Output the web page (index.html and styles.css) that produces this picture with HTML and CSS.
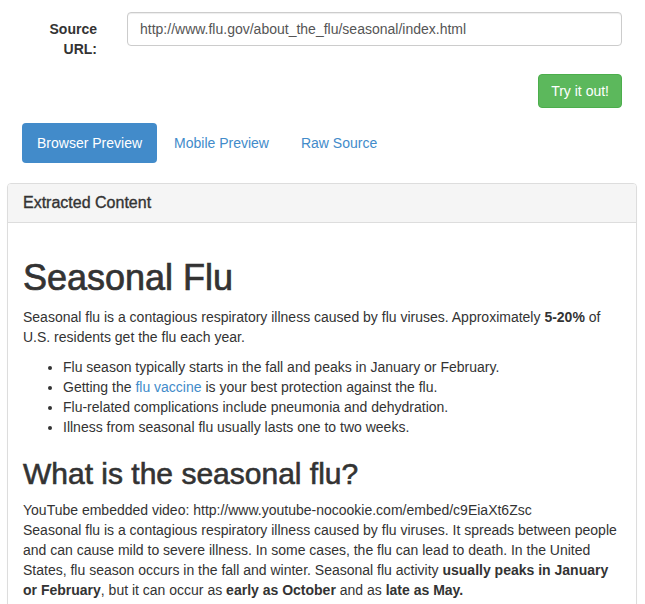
FILE: index.html
```html
<!DOCTYPE html>
<html>
<head>
<meta charset="utf-8">
<link rel="stylesheet" href="styles.css">
</head>
<body>
<div class="container">
  <form class="form">
    <div class="form-row">
      <label class="label" for="url">Source URL:</label>
      <div class="field">
        <input id="url" class="input" type="text" value="http://www.flu.gov/about_the_flu/seasonal/index.html">
      </div>
    </div>
    <div class="actions">
      <button type="button" class="btn-success">Try it out!</button>
    </div>
  </form>
  <ul class="pills">
    <li class="pill active"><a href="#">Browser Preview</a></li>
    <li class="pill"><a href="#">Mobile Preview</a></li>
    <li class="pill"><a href="#">Raw Source</a></li>
  </ul>
  <div class="panel">
    <div class="panel-heading">Extracted Content</div>
    <div class="panel-body">
      <h1>Seasonal Flu</h1>
      <p>Seasonal flu is a contagious respiratory illness caused by flu viruses. Approximately <strong>5-20%</strong> of U.S. residents get the flu each year.</p>
      <ul class="bullets">
        <li>Flu season typically starts in the fall and peaks in January or February.</li>
        <li>Getting the <a href="#">flu vaccine</a> is your best protection against the flu.</li>
        <li>Flu-related complications include pneumonia and dehydration.</li>
        <li>Illness from seasonal flu usually lasts one to two weeks.</li>
      </ul>
      <h2>What is the seasonal flu?</h2>
      <div class="embed">YouTube embedded video: http://www.youtube-nocookie.com/embed/c9EiaXt6Zsc</div>
      <p>Seasonal flu is a contagious respiratory illness caused by flu viruses. It spreads between people and can cause mild to severe illness. In some cases, the flu can lead to death. In the United States, flu season occurs in the fall and winter. Seasonal flu activity <strong>usually peaks in January or February</strong>, but it can occur as <strong>early as October</strong> and as <strong>late as May.</strong></p>
    </div>
  </div>
</div>
</body>
</html>
```

FILE: styles.css
```css
* { box-sizing: border-box; }
html, body {
  margin: 0;
  padding: 0;
  background: #fff;
}
body {
  font-family: "Liberation Sans", Arial, sans-serif;
  font-size: 14px;
  line-height: 20px;
  color: #333;
}
.container {
  width: 630px;
  margin-left: 7px;
  padding-top: 12px;
}
.form { margin: 0; }
.form-row {
  display: grid;
  grid-template-columns: 105px 1fr;
  margin-bottom: 15px;
}
.label {
  font-weight: bold;
  text-align: right;
  padding: 7px 15px 0 15px;
}
.field { padding: 0 15px; }
.input {
  display: block;
  width: 100%;
  height: 34px;
  padding: 6px 12px;
  font-family: inherit;
  font-size: 14px;
  line-height: 20px;
  color: #555;
  border: 1px solid #ccc;
  border-radius: 4px;
  box-shadow: inset 0 1px 1px rgba(0,0,0,0.075);
  background: #fff;
}
.actions {
  display: flex;
  justify-content: flex-end;
  padding-right: 15px;
}
.btn-success {
  height: 34px;
  padding: 6px 12px;
  font-family: inherit;
  font-size: 14px;
  line-height: 20px;
  color: #fff;
  background: #5cb85c;
  border: 1px solid #4cae4c;
  border-radius: 4px;
}
.pills {
  list-style: none;
  margin: 15px 0 20px 0;
  padding: 0 0 0 15px;
  display: flex;
}
.pill + .pill { margin-left: 2px; }
.pill a {
  display: block;
  padding: 10px 15px;
  color: #428bca;
  text-decoration: none;
  border-radius: 4px;
}
.pill.active a {
  color: #fff;
  background: #428bca;
}
.panel {
  border: 1px solid #ddd;
  border-radius: 4px;
  box-shadow: 0 1px 1px rgba(0,0,0,0.05);
}
.panel-heading {
  background: #f5f5f5;
  border-bottom: 1px solid #ddd;
  border-radius: 3px 3px 0 0;
  padding: 10px 15px;
  font-size: 16px;
  line-height: 17.6px;
  color: #333;
  -webkit-text-stroke: 0.35px #333;
}
.panel-body { padding: 15px; }
h1 {
  font-size: 36px;
  line-height: 1.1;
  font-weight: 500;
  margin: 20px 0 10px;
  -webkit-text-stroke: 0.7px #333;
}
h2 {
  font-size: 30px;
  line-height: 1.1;
  font-weight: 500;
  margin: 20px 0 10px;
  -webkit-text-stroke: 0.6px #333;
}
p { margin: 0 0 10px; }
.bullets {
  margin: 0 0 10px;
  padding-left: 40px;
}
a { color: #428bca; text-decoration: none; }
```
